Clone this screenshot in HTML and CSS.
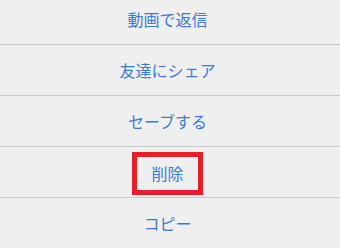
FILE: index.html
```html
<!DOCTYPE html>
<html lang="ja">

<head>
    <meta charset="UTF-8">
    <meta name="viewport" content="width=device-width, initial-scale=1.0">
    <title>メニュー</title>
    <link rel="stylesheet" href="styles.css">
</head>

<body>
    <div id="actionSheet">
        <div class="action first">動画で返信</div>
        <div class="action">友達にシェア</div>
        <div class="action">セーブする</div>
        <div class="action"><span class="highlight">削除</span></div>
        <div class="action last">コピー</div>
    </div>
</body>

</html>
```

FILE: styles.css
```css
body {
    font-family: "Noto Sans CJK JP", "Noto Sans", sans-serif;
    margin: 0;
    padding: 0;
    background-color: #efefef;
    overflow: hidden;
}

#actionSheet {
    display: flex;
    flex-direction: column;
    margin-top: -6px;
}

.action {
    height: 50px;
    display: flex;
    align-items: center;
    justify-content: center;
    padding-right: 5px;
    border-bottom: 1px solid #c9c9c9;
    color: #3b7bd0;
    font-size: 16px;
}

.action.last {
    border-bottom: none;
}

.highlight {
    display: inline-block;
    margin-top: 3px;
    padding: 2px 14px;
    line-height: 29px;
    border: 5px solid #e61e28;
}
```
